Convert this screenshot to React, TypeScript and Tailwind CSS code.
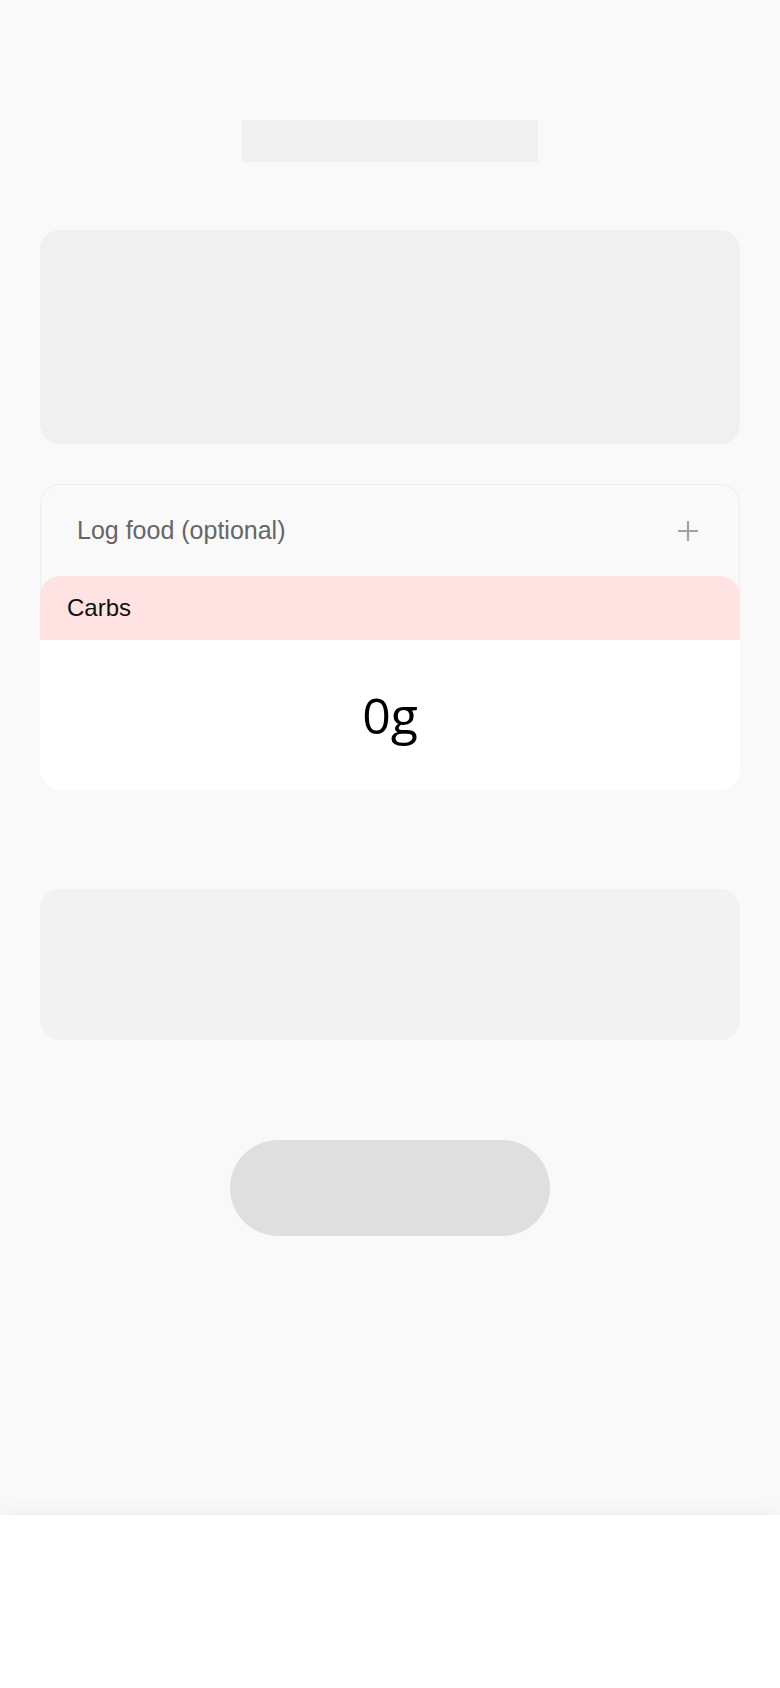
function Skeleton({ className }: { className: string }) {
  return <div className={className} />;
}

function PlusIcon() {
  return (
    <svg width="22" height="22" viewBox="0 0 22 22" className="text-[#a3a3a3]">
      <path d="M11 1v20M1 11h20" stroke="currentColor" strokeWidth="2.2" />
    </svg>
  );
}

function LogFoodCard() {
  return (
    <div className="mt-10 rounded-[20px] border border-[#eeeeee] bg-[#f9f9f9]">
      <div className="flex h-[91px] items-center justify-between pl-9 pr-10">
        <span className="text-[25px] text-[#666666]">Log food (optional)</span>
        <PlusIcon />
      </div>
      <div className="-mx-px -mb-px overflow-hidden rounded-[20px]">
        <div className="flex h-16 items-center bg-[#ffe3e3] pl-[27px]">
          <span className="text-[24px] text-[#111111]">Carbs</span>
        </div>
        <div className="flex h-[150px] items-center justify-center bg-white">
          <span className="font-['Open_Sans',sans-serif] text-[50px] leading-none text-black">0g</span>
        </div>
      </div>
    </div>
  );
}

export default function App() {
  return (
    <div className="flex min-h-[1688px] flex-col bg-white font-['Liberation_Sans',Arial,sans-serif]">
      <main className="flex flex-1 flex-col bg-[#f9f9f9] px-10 pt-[120px]">
        <Skeleton className="mx-auto h-[42px] w-[296px] bg-[#f0f0f0]" />
        <Skeleton className="mt-[68px] h-[214px] rounded-[20px] bg-[#f0f0f0]" />
        <LogFoodCard />
        <Skeleton className="mt-[99px] h-[151px] rounded-[20px] bg-[#f2f2f2]" />
        <Skeleton className="mx-auto mt-[100px] h-24 w-80 rounded-full bg-[#dfdfdf]" />
      </main>
      <nav className="h-[173px] bg-white shadow-[0_-6px_16px_rgba(0,0,0,0.035)]" />
    </div>
  );
}
